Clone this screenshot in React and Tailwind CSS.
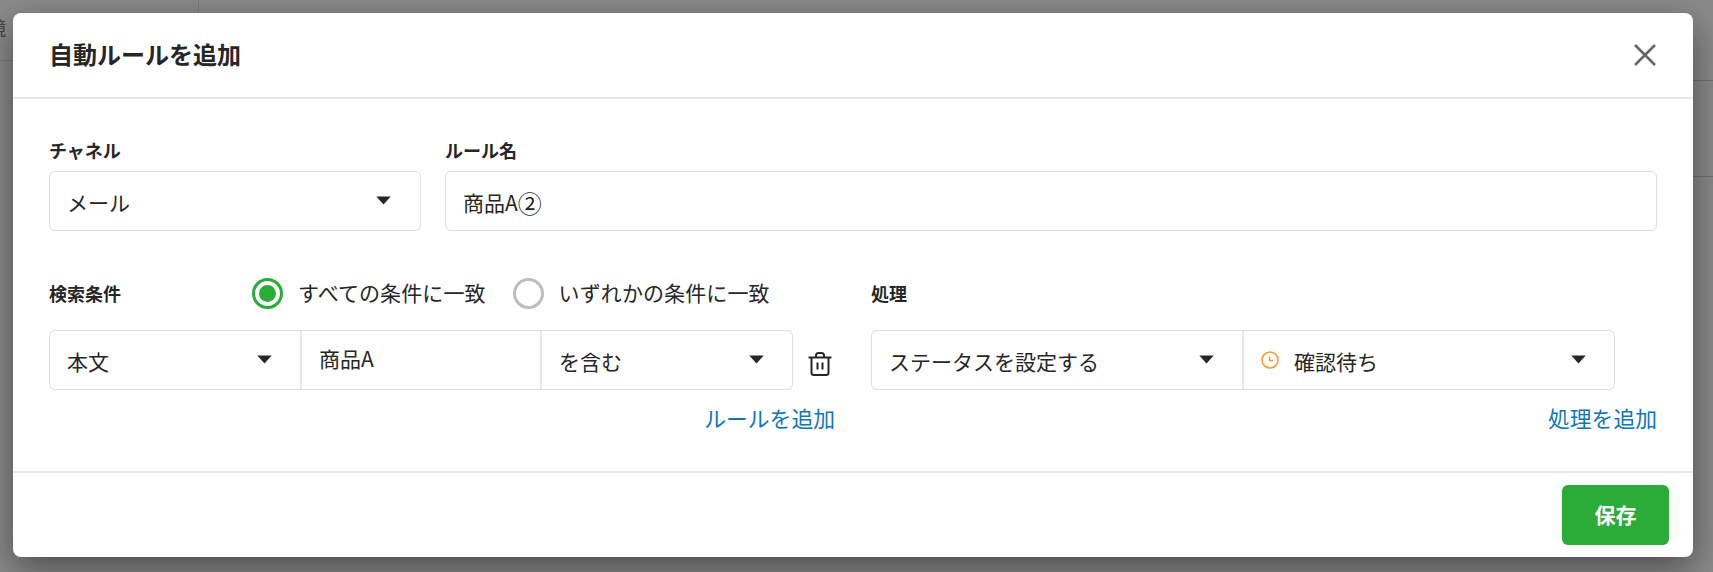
const FONT = "font-['Noto_Sans_CJK_JP','Noto_Sans',sans-serif]";

const Caret = () => (
  <svg width="15" height="9" viewBox="0 0 15 9" className="mt-[-1px] shrink-0">
    <path d="M0.3 0.5h14.400L7.500 8.500z" fill="#262626" />
  </svg>
);

const Field = ({ className = "", children, caret = true }) => (
  <div className={`flex items-center justify-between ${className}`}>
    <div className="flex items-center pt-[3px]">{children}</div>
    {caret && <Caret />}
  </div>
);

const TrashIcon = () => (
  <svg width="26" height="26" viewBox="0 0 26 26" fill="none" stroke="#262626" strokeWidth="2">
    <path d="M1.500 6.500h23" />
    <path d="M9 6V4.500A2.500 2.500 0 0 1 11.500 2h3A2.500 2.500 0 0 1 17 4.500V6" />
    <path d="M4.500 7v14.500A2.500 2.500 0 0 0 7 24h12a2.500 2.500 0 0 0 2.500-2.500V7" />
    <path d="M10.500 11.500v7M15.500 11.500v7" />
  </svg>
);

const ClockIcon = () => (
  <svg width="18" height="18" viewBox="0 0 18 18" fill="none" stroke="#f59a2e" strokeWidth="1.600" className="mr-[15px] mt-[-3px]">
    <circle cx="9" cy="9" r="8" />
    <path d="M8.500 5.500v4h3.500" />
  </svg>
);

const Radio = ({ checked, label, className = "" }) => (
  <div className={`flex items-center ${className}`}>
    {checked ? (
      <span className="flex h-[31px] w-[31px] items-center justify-center rounded-full border-[3px] border-[#2bac38]">
        <span className="h-[17px] w-[17px] rounded-full bg-[#2bac38]" />
      </span>
    ) : (
      <span className="h-[31px] w-[31px] rounded-full border-[3px] border-[#bdbdbd]" />
    )}
    <span className="ml-[15px] text-[21px] tracking-[0.100px] text-[#262626]">{label}</span>
  </div>
);

export default function App() {
  return (
    <div className={`${FONT} relative h-[572px] w-[1713px] overflow-hidden bg-[#8a8a8a]`}>
      {/* page behind the overlay */}
      <div className="absolute left-[198px] top-0 h-[13px] w-px bg-[#7a7a7a]" />
      <div className="absolute left-0 top-[60px] h-px w-[13px] bg-[#7a7a7a]" />
      <div className="absolute left-[1693px] top-[80px] h-px w-[20px] bg-[#6f6f6f]" />
      <div className="absolute left-[1693px] top-[176px] h-px w-[20px] bg-[#6f6f6f]" />
      <div className="absolute left-0 top-[15px] text-[18px] leading-[24px] text-[#444]">
        <span className="ml-[-12px]">鏡</span>
      </div>

      <div className="absolute left-[13px] top-[13px] flex h-[544px] w-[1680px] flex-col rounded-[8px] bg-white shadow-[0_12px_36px_rgba(0,0,0,0.45)]">
        <div className="flex h-[86px] shrink-0 items-center justify-between border-b-2 border-[#e6e6e6] pl-[36px] pr-[37px]">
          <h1 className="-mt-[2px] text-[24px] font-bold text-[#262626]">自動ルールを追加</h1>
          <svg width="22" height="22" viewBox="0 0 22 22" stroke="#666" strokeWidth="2.600">
            <path d="M1 1l20 20M21 1L1 21" />
          </svg>
        </div>

        <div className="flex h-[374px] shrink-0 flex-col border-b-2 border-[#e6e6e6] pl-[36px] pr-[36px]">
          <div className="mt-[38px] flex gap-[24px]">
            <div className="w-[372px]">
              <div className="mb-[8px] text-[18px] font-bold leading-[26px] text-[#262626]">チャネル</div>
              <Field className="h-[60px] rounded-[6px] border border-[#dedede] pl-[17px] pr-[29px] text-[21px] text-[#262626]">メール</Field>
            </div>
            <div className="flex-1">
              <div className="mb-[8px] text-[18px] font-bold leading-[26px] text-[#262626]">ルール名</div>
              <Field caret={false} className="h-[60px] rounded-[6px] border border-[#dedede] pl-[17px] text-[21px] text-[#262626]">
                商品A<span className="text-[24px] leading-[28px]">②</span>
              </Field>
            </div>
          </div>

          <div className="mt-[46px] flex">
            <div className="w-[822px]">
              <div className="flex h-[32px] items-center">
                <div className="w-[203px] text-[18px] font-bold text-[#262626]">検索条件</div>
                <Radio checked label="すべての条件に一致" />
                <Radio label="いずれかの条件に一致" className="ml-[27px]" />
              </div>
              <div className="mt-[21px] flex items-center">
                <div className="flex h-[60px] w-[744px] rounded-[6px] border border-[#dedede] text-[21px] text-[#262626]">
                  <Field className="w-[252px] border-r-2 border-[#e6e6e6] pl-[17px] pr-[28px]">本文</Field>
                  <Field caret={false} className="w-[240px] border-r-2 border-[#e6e6e6] pl-[17px]">
                    <span className="-mt-[5px]">商品A</span>
                  </Field>
                  <Field className="flex-1 pl-[17px] pr-[28px]">を含む</Field>
                </div>
                <div className="ml-[14px] mt-[8px]"><TrashIcon /></div>
              </div>
              <div className="mt-[13px] w-[786px] text-right text-[21.800px] leading-[29px] text-[#0f75bc]">ルールを追加</div>
            </div>

            <div className="flex-1">
              <div className="flex h-[32px] items-center text-[18px] font-bold text-[#262626]">処理</div>
              <div className="mt-[21px] flex h-[60px] w-[744px] rounded-[6px] border border-[#dedede] text-[21px] text-[#262626]">
                <Field className="w-[372px] border-r-2 border-[#e6e6e6] pl-[17px] pr-[28px]">ステータスを設定する</Field>
                <Field className="flex-1 pl-[17px] pr-[28px]">
                  <ClockIcon />
                  確認待ち
                </Field>
              </div>
              <div className="mt-[13px] text-right text-[21.800px] leading-[29px] text-[#0f75bc]">処理を追加</div>
            </div>
          </div>
        </div>

        <div className="flex flex-1 items-center justify-end pr-[24px]">
          <button className="h-[60px] w-[107px] rounded-[6px] bg-[#2bac38] text-[21px] font-bold text-white">保存</button>
        </div>
      </div>
    </div>
  );
}
